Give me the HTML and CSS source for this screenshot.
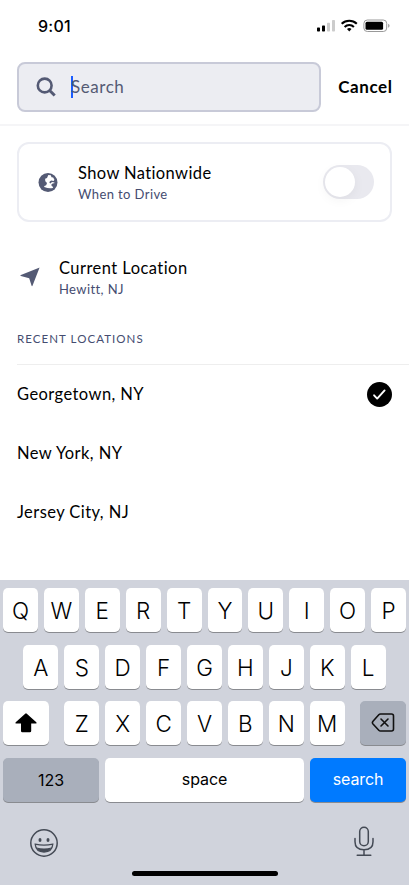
FILE: index.html
```html
<!DOCTYPE html>
<html lang="en">
<head>
<meta charset="utf-8">
<title>Location search</title>
<link rel="stylesheet" href="styles.css">
</head>
<body>
<div class="screen">
  <header class="status">
    <span class="time">9:01</span>
    <svg class="status-icons" width="76" height="16" viewBox="0 0 76 16">
      <g fill="#000"><rect x="1" y="9.500" width="3" height="4" rx=".7"/><rect x="6" y="7.500" width="3" height="6" rx=".7"/></g>
      <g fill="#ccc"><rect x="11" y="4.700" width="3" height="8.800" rx=".7"/><rect x="16" y="2" width="3" height="11.500" rx=".7"/></g>
      <g fill="none" stroke="#000" stroke-width="2.100"><path d="M25.700 5.800a11 11 0 0 1 15.100 0"/><path d="M28.600 8.900a6.700 6.700 0 0 1 9.300 0"/></g>
      <path d="M31 11.100a3.400 3.400 0 0 1 4.500 0l-2.250 2.300z"/>
      <rect x="47.900" y="2" width="22.800" height="11.500" rx="3.400" fill="none" stroke="#999"/>
      <rect x="49.500" y="3.700" width="17.600" height="8.100" rx="1.500"/>
      <path d="M72 5.800v4q1.600-.7 1.600-2t-1.600-2z" fill="#aaa"/>
    </svg>
  </header>
  <div class="search-row">
    <div class="field">
      <svg class="glass" width="22" height="22" viewBox="0 0 22 22" fill="none" stroke="#545a74" stroke-width="2.600"><circle cx="8.700" cy="9.500" r="6.900"/><path d="M13.400 14.200l5.300 5.300" stroke-width="3"/></svg>
      <span class="caret"></span><span class="placeholder">Search</span>
    </div>
    <span class="cancel">Cancel</span>
  </div>
  <main>
    <section class="card">
      <svg class="globe" width="20" height="20" viewBox="0 0 20 20"><circle cx="10" cy="10.500" r="9.500" fill="#545a74"/><path d="M10.300 3L12.800 3.200 13.500 5.200 15.200 5.600 16.400 7.800 15.600 9 13.200 8.600Q11.200 9.300 11.400 10.700L12.400 11.500 14 9.900 16.500 10.500 16.300 11.300Q13.900 11 13.300 12.800 13.200 14.300 15.200 14.900L14.700 15.900Q11.500 17.200 6.200 14.900L6.300 14.100 8.200 13.300 9 10.900 7.300 9.300 7.100 6.800 9 6z" fill="#fff"/></svg>
      <div class="lines"><span class="title nationwide">Show Nationwide</span><span class="sub drive">When to Drive</span></div>
      <span class="toggle"><span class="knob"></span></span>
    </section>
    <section class="current">
      <svg class="arrow" width="20" height="20" viewBox="0 0 20 20"><path d="M19.100.7Q19.600.4 19.400 1L12.600 18.600Q12 20 11.500 18.600L9.200 11.200.9 9.100Q-.2 8.600.9 8.100z" fill="#545a74"/></svg>
      <div class="lines"><span class="title location">Current Location</span><span class="sub hewitt">Hewitt, NJ</span></div>
    </section>
    <h2>RECENT LOCATIONS</h2>
    <ul>
      <li><span class="title georgetown">Georgetown, NY</span><svg width="26" height="26" viewBox="0 0 26 26"><circle cx="12.500" cy="13.500" r="12.500"/><path d="M7.100 14.300l3.100 3.300 7.400-8.200" fill="none" stroke="#fff" stroke-width="1.900" stroke-linecap="round" stroke-linejoin="round"/></svg></li>
      <li><span class="title york">New York, NY</span></li>
      <li><span class="title jersey">Jersey City, NJ</span></li>
    </ul>
  </main>
  <div class="keyboard">
    <div class="keys">
      <span class="key">Q</span><span class="key">W</span><span class="key">E</span><span class="key">R</span><span class="key">T</span><span class="key">Y</span><span class="key">U</span><span class="key">I</span><span class="key">O</span><span class="key">P</span>
    </div>
    <div class="keys">
      <span class="key">A</span><span class="key">S</span><span class="key">D</span><span class="key">F</span><span class="key">G</span><span class="key">H</span><span class="key">J</span><span class="key">K</span><span class="key">L</span>
    </div>
    <div class="keys spread">
      <span class="key wide"><svg width="24" height="22" viewBox="0 0 24 22"><path d="M11.200 1.700Q12 1 12.800 1.700L22.300 10.300Q23.400 11.600 21.700 11.600H17.200V18.900Q17.200 20.300 15.800 20.300H8.400Q7 20.300 7 18.900V11.600H2.300Q.6 11.600 1.700 10.300z"/></svg></span>
      <div class="keys"><span class="key">Z</span><span class="key">X</span><span class="key">C</span><span class="key">V</span><span class="key">B</span><span class="key">N</span><span class="key">M</span></div>
      <span class="key wide gray"><svg width="24" height="22" viewBox="0 0 24 22" fill="none" stroke="#111" stroke-width="1.600" stroke-linejoin="round" stroke-linecap="round"><path d="M9.500 2h11q2 0 2 2v13q0 2-2 2h-11q-1 0-1.700-.8L2 12q-1.200-1.400 0-2.700L7.800 2.800Q8.500 2 9.500 2z"/><path d="M10 7l7 7M17 7l-7 7"/></svg></span>
    </div>
    <div class="keys">
      <span class="key action gray num">123</span><span class="key space">space</span><span class="key action blue">search</span>
    </div>
    <div class="tools">
      <svg width="30" height="30" viewBox="0 0 30 30"><circle cx="15" cy="15" r="13.200" fill="none" stroke="#444a55" stroke-width="1.500"/><g fill="#444a55"><ellipse cx="11" cy="12" rx="1.500" ry="2"/><ellipse cx="19" cy="12" rx="1.500" ry="2"/></g><path d="M6.200 16.200q8.800 1.700 17.600 0-.8 7.800-8.800 7.800t-8.800-7.800z" fill="none" stroke="#444a55" stroke-width="1.300"/><path d="M7.600 19.500q7.400 1.800 14.800 0-2 4.500-7.400 4.500t-7.400-4.500z" fill="#444a55"/></svg>
      <svg width="22" height="32" viewBox="0 0 22 32" fill="none" stroke="#444a55" stroke-width="1.500" stroke-linecap="round"><rect x="6.700" y="1.200" width="8.600" height="18.600" rx="4.300"/><path d="M2 12.500v3.200q0 8 9 8t9-8v-3.200M11 23.700v5.200M4.200 29.200h13.600"/></svg>
    </div>
    <div class="home"></div>
  </div>
</div>
</body>
</html>
```
FILE: styles.css
```css
* { box-sizing: border-box; }
body { margin: 0; background: #fff; color: #000; font-family: Lato, "Liberation Sans", sans-serif; font-variant-ligatures: none; }
.screen { width: 409px; height: 885px; display: flex; flex-direction: column; overflow: hidden; white-space: nowrap; }
.screen svg { display: block; flex: none; }
.status { height: 62px; padding: 18px 17px 0 38px; display: flex; justify-content: space-between; align-items: flex-start; }
.time { font: 500 16px/16px Inter, sans-serif; letter-spacing: .25px; }
.search-row { height: 64px; padding: 0 17px; display: flex; align-items: flex-start; justify-content: space-between; border-bottom: 2px solid #f5f5f7; }
.field { width: 304px; height: 50px; border: 2px solid #c8cad8; border-radius: 8px; background: #ecedf2; display: flex; align-items: center; padding-left: 17px; }
.caret { width: 2px; height: 22px; margin-left: 13px; background: #1a5cff; }
.placeholder { font-size: 17px; line-height: 24px; color: #545a74; margin-left: -2px; letter-spacing: .55px; }
.cancel { font-size: 17px; font-weight: 700; line-height: 50px; letter-spacing: .55px; margin-right: -.45px; }
main { height: 454px; padding: 16px 0 0 17px; }
.card { width: 375px; height: 80px; border: 2px solid #ecedf3; border-radius: 12px; display: flex; align-items: center; padding: 0 16px 0 19px; }
.lines { display: flex; flex-direction: column; }
.card .lines { flex: 1; margin-left: 20px; padding-top: 2px; }
.title { font-size: 16.500px; line-height: 22px; }
.nationwide { letter-spacing: .38px; }
.location { letter-spacing: .45px; }
.georgetown, .york, .jersey { letter-spacing: .43px; }
.sub { font-size: 13px; line-height: 20px; color: #454c70; letter-spacing: .4px; }
.toggle { width: 51px; height: 34px; padding: 2px; border-radius: 17px; background: #e9e9ef; }
.knob { display: block; width: 30px; height: 30px; border-radius: 50%; background: #fff; box-shadow: 0 3px 12px #0000000d; }
.current { display: flex; align-items: center; height: 44px; margin-top: 34px; padding-left: 3px; }
.current .arrow { margin-top: -2px; }
.current .lines { margin-left: 19px; }
h2 { margin: 28px 0 0; font-size: 11.500px; font-weight: 400; line-height: 22px; letter-spacing: 1.060px; color: #454c70; }
ul { list-style: none; margin: 14px 0 0; padding: 0; border-top: 1px solid #eee; }
li { height: 58.800px; display: flex; align-items: center; justify-content: space-between; padding-right: 16px; }
.keyboard { height: 305px; background: #d0d3dc; padding: 8px 3px 0; display: flex; flex-direction: column; gap: 12.600px; font-family: Inter, sans-serif; }
.keys { display: flex; justify-content: center; gap: 6px; }
.key { width: 34.900px; height: 44px; border-radius: 5px; background: #fff; box-shadow: 0 1px 0 #898b90; display: flex; align-items: center; justify-content: center; font-size: 22.500px; font-weight: 300; padding-top: 1px; }
.spread { justify-content: space-between; }
.key.wide { width: 46px; padding-top: 0; }
.key.gray { background: #a9afbb; }
.key.action { width: 96px; font-size: 16px; font-weight: 400; }
.key.space { width: 199px; font-size: 16px; font-weight: 400; padding: 0 0 2px; letter-spacing: -.1px; }
.key.action.blue { background: #007aff; color: #fff; padding: 0 0 2px; letter-spacing: -.15px; }
.tools { display: flex; justify-content: space-between; align-items: center; padding: 0 31px 0 26px; height: 32px; margin-top: 12px; }
.tools svg:first-child { margin: 2px 0 0 0; }
.home { width: 146px; height: 5px; border-radius: 3px; background: #000; margin: 0 auto; }
```
